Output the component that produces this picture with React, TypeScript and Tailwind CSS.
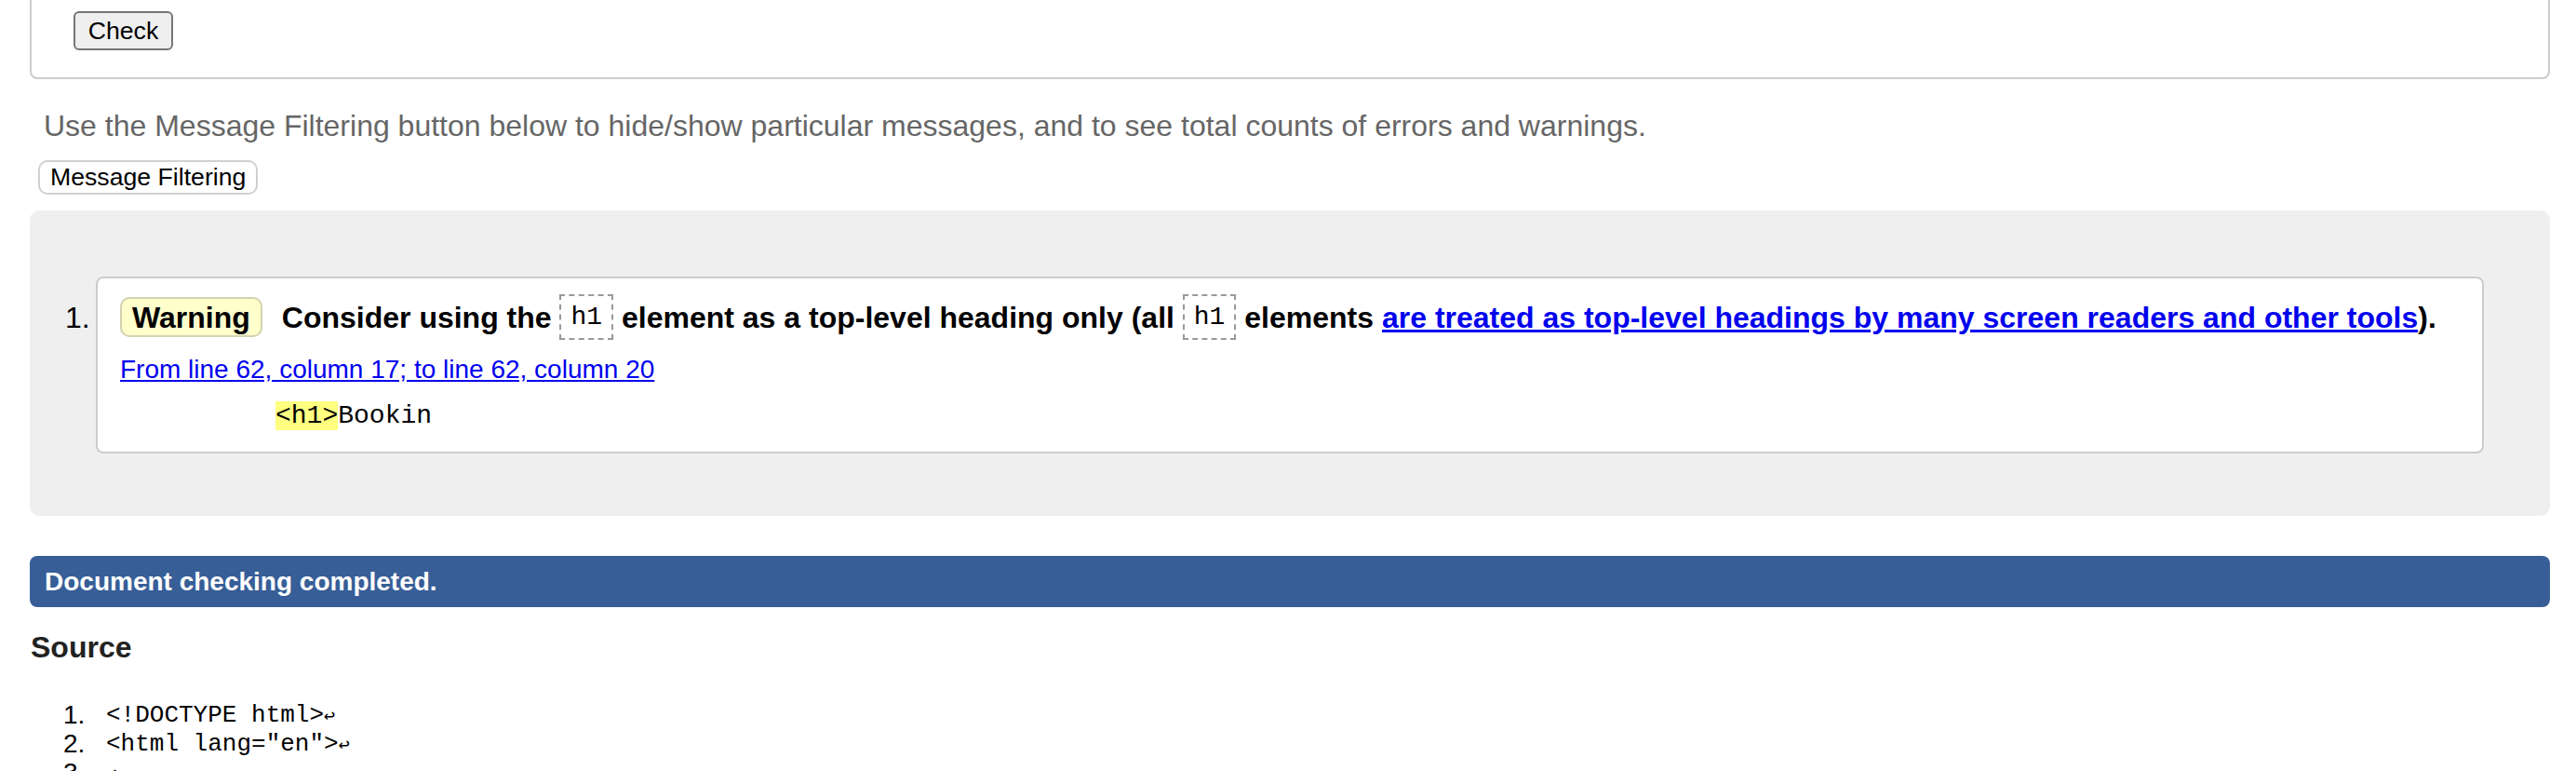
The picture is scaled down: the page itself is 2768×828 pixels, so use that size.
export default function App() {
  const sourceLines = [
    '<!DOCTYPE html>',
    '<html lang="en">',
    '',
    '<head>',
    '    <meta charset="UTF-8">',
  ];
  return (
    <div className="h-[828px] overflow-hidden bg-white font-['Liberation_Sans',Arial,sans-serif] text-black">
      <div className="ml-[32px] mr-[28px]">
        {/* top form box */}
        <div className="-mt-[20px] flex rounded-[8px] border-2 border-[#cccccc] pl-[45px] pt-[30px] pb-[29px]">
          <button className="flex h-[42px] w-[107px] items-center justify-center rounded-[6px] border-2 border-[#767676] bg-[#efefef] text-[26.67px] leading-none text-black">
            Check
          </button>
        </div>

        <p className="ml-[15px] mt-[32px] whitespace-nowrap text-[32px] leading-[37px] text-[#666666]">
          Use the Message Filtering button below to hide/show particular messages, and to see total counts of errors and warnings.
        </p>

        <div className="mt-[18px] flex pl-[9px]">
          <button className="flex h-[37px] items-center rounded-[10px] border-2 border-[#d0d0d0] bg-white px-[11px] text-[26.67px] leading-none text-black">
            Message Filtering
          </button>
        </div>

        {/* messages panel */}
        <div className="mt-[17px] flex items-start rounded-[10px] bg-[#eeefee] pl-[38px] pr-[71px] pt-[71px] pb-[67px]">
          <div className="w-[33px] pt-[26px] text-[32px] leading-[36px]">1.</div>
          <div className="flex-1 rounded-[8px] border-2 border-[#cccccc] bg-white pl-[24px] pt-[17px] pb-[22px]">
            <div className="flex h-[49px] items-center whitespace-pre text-[32px] font-bold leading-[36px]">
              <span className="flex h-[43px] items-center rounded-[10px] border-2 border-[#d2d2b0] bg-[#ffffcc] px-[11px]">
                Warning
              </span>
              <span className="ml-[21px]">Consider using the </span>
              <code className="flex h-[49px] items-center border-2 border-dashed border-[#999999] px-[10px] font-['Liberation_Mono','Courier_New',monospace] text-[28px] font-normal">
                h1
              </code>
              <span> element as a top-level heading only (all </span>
              <code className="flex h-[49px] items-center border-2 border-dashed border-[#999999] px-[10px] font-['Liberation_Mono','Courier_New',monospace] text-[28px] font-normal">
                h1
              </code>
              <span> elements </span>
              <a href="#" className="text-[#0000ee] underline">
                are treated as top-level headings by many screen readers and other tools
              </a>
              <span>).</span>
            </div>
            <div className="mt-[16px] text-[28px] leading-[32px]">
              <a href="#" className="text-[#0000ee] underline">
                From line 62, column 17; to line 62, column 20
              </a>
            </div>
            <div className="mt-[18px] whitespace-pre pl-[167px] font-['Liberation_Mono','Courier_New',monospace] text-[28px] leading-[32px]">
              <span className="bg-[#ffff80]">&lt;h1&gt;</span>Bookin
            </div>
          </div>
        </div>

        {/* status bar */}
        <div className="mt-[43px] flex h-[55px] items-center rounded-[8px] bg-[#375e97] pl-[16px] text-[28px] font-bold text-white">
          Document checking completed.
        </div>

        <h2 className="mt-[25px] pl-[1px] text-[32px] font-bold leading-[36px] text-[#222222]">Source</h2>

        <ol className="mt-[39px] pl-[36px]">
          {sourceLines.map((line, i) => (
            <li key={i} className="flex h-[31px] items-center">
              <span className="w-[46px] text-[28px] leading-none">{i + 1}.</span>
              <span className="whitespace-pre font-['Liberation_Mono','Courier_New',monospace] text-[26px] leading-none">
                {line}
                <span className="text-[20px]">↩</span>
              </span>
            </li>
          ))}
        </ol>
      </div>
    </div>
  );
}
